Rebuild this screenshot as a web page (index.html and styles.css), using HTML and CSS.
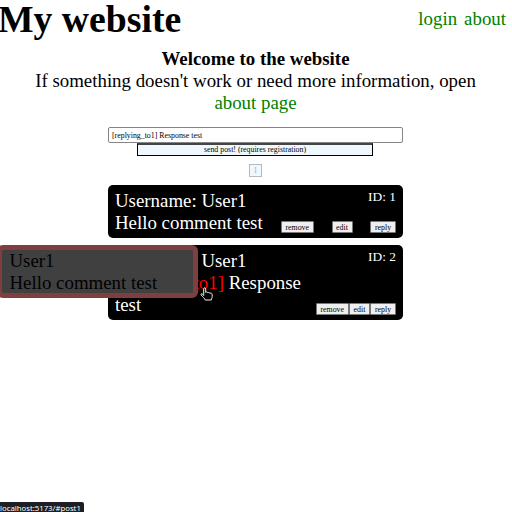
FILE: index.html
```html
<!DOCTYPE html>
<html lang="en">
<head>
<meta charset="utf-8">
<title>My website</title>
<link rel="stylesheet" href="styles.css">
</head>
<body>
<header class="top">
  <h1 class="title">My website</h1>
  <nav class="nav"><a class="link">login</a><a class="link">about</a></nav>
</header>
<section class="intro">
  <b>Welcome to the website</b>
  <p>If something doesn't work or need more information, open<br><a class="link">about page</a></p>
</section>
<main class="main">
  <div class="field">[replying_to1] Response test</div>
  <div class="send">send post! (requires registration)</div>
  <div class="page">1</div>
  <article class="post">
    <div class="text">Username: User1<br>Hello comment test</div>
    <span class="id">ID: 1</span>
    <div class="actions spaced"><span class="btn remove">remove</span><span class="btn edit">edit</span><span class="btn reply">reply</span></div>
  </article>
  <article class="post second">
    <div class="text">Username: User1<br><span class="ref">[replying_to1]</span> Response<br>test</div>
    <span class="id">ID: 2</span>
    <div class="actions"><span class="btn remove">remove</span><span class="btn edit">edit</span><span class="btn reply">reply</span></div>
  </article>
</main>
<div class="preview">User1<br>Hello comment test</div>
<svg class="cursor" width="14" height="16" viewBox="0 0 14 16"><path d="M3.7 9.5V3C3.7 1.4 5.7 1.4 5.7 3V6.5C6.2 5.7 7.5 5.8 7.8 6.8 8.5 6.1 9.7 6.4 9.9 7.4 10.8 6.8 12.2 7.2 12.2 8.5V10.5C12.2 12 11.5 12.3 11.2 14H5.2C4.8 12.2 2.4 10.8 1.2 9 .6 7.8 1.9 7.2 2.7 8.2Z" fill="#000" stroke="#eee" stroke-width="1" stroke-linejoin="round"/></svg>
<div class="status">localhost:5173/#post1</div>
</body>
</html>
```
FILE: styles.css
```css
* { box-sizing: border-box; }
body {
  margin: 0;
  height: 512px;
  overflow: hidden;
  background: #fff;
  color: #000;
  font: 18.87px/22px "Liberation Serif", serif;
  white-space: nowrap;
}
.top { display: flex; justify-content: space-between; height: 48px; padding-right: 6px; }
.title { margin: -3px 0 0 -2px; font-size: 37.7px; line-height: 44px; }
.nav { display: flex; gap: 7px; padding-top: 8px; }
.link { color: #008000; }
.intro { width: 511px; text-align: center; }
.intro p { margin: 0; }
.main { width: 295px; margin: 13px 0 0 108px; }
.field {
  height: 16px;
  padding-left: 3px;
  border: 1px solid #858585;
  border-radius: 2px;
  font-size: 7.85px;
  line-height: 15px;
}
.send {
  width: 236px;
  height: 13px;
  margin-left: 29px;
  border: 1px solid #000;
  border-top: 2px solid #444;
  background: #f0f8ff;
  font-size: 7.85px;
  line-height: 10px;
  text-align: center;
}
.page {
  width: 13px;
  height: 13px;
  margin: 8px auto 8px;
  border: 1px solid #b5babf;
  background: #f0f8ff;
  color: #aaa;
  font-size: 7.85px;
  line-height: 12px;
  text-align: center;
}
.post {
  display: grid;
  grid-template-columns: 1fr auto;
  position: relative;
  height: 53px;
  margin-bottom: 7px;
  padding: 5px 7px 3px;
  border-radius: 5px;
  background: #000;
  color: #fff;
}
.second { height: 75px; }
.ref { color: #f00; }
.id { font-size: 13.4px; line-height: 13px; }
.actions { position: absolute; right: 7px; bottom: 5px; display: flex; }
.spaced { gap: 17.5px; }
.btn {
  height: 12px;
  border: 1px solid #777;
  border-radius: 1px;
  background: #efefef;
  color: #000;
  font-size: 7.85px;
  line-height: 11px;
  text-align: center;
}
.remove { width: 33.5px; }
.edit { width: 21px; }
.reply { width: 26px; }
.preview {
  position: absolute;
  left: -3px;
  top: 245px;
  width: 201px;
  height: 53px;
  padding: 0 7.5px;
  border: 5px solid #803f3f;
  border-radius: 6px;
  background: #404040;
}
.cursor { position: absolute; left: 200px; top: 286px; }
.status {
  position: absolute;
  left: 0;
  bottom: 0;
  width: 84px;
  height: 10px;
  border-top-right-radius: 2px;
  background: #1e1f24;
  color: #fff;
  font: 7.75px/13px "Noto Sans", sans-serif;
}
```
